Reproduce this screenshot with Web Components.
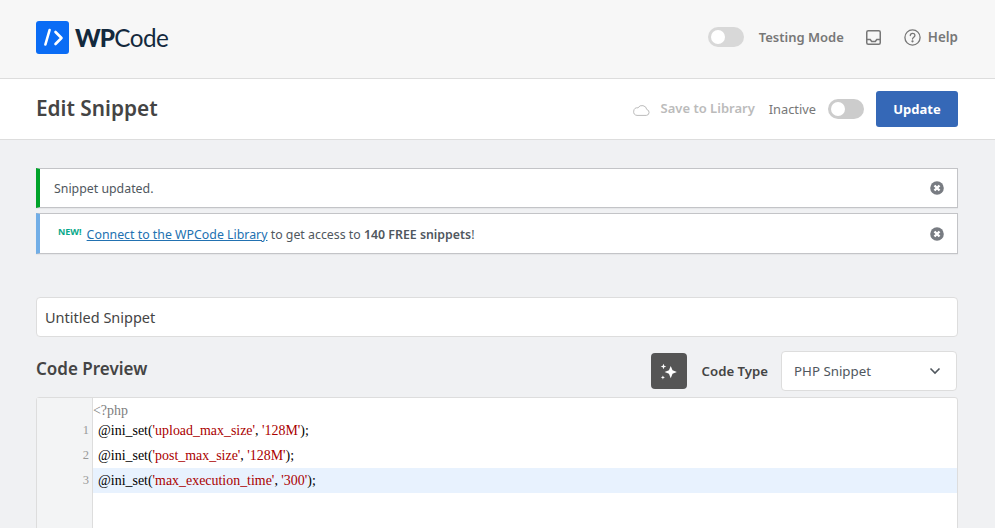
<!DOCTYPE html>
<html><head><meta charset="utf-8"><style>
html,body{margin:0;padding:0;background:#fff;height:528px;overflow:hidden}
body{font-family:"Noto Sans","Open Sans",sans-serif;}
wp-page{width:995px}
</style></head><body>
<wp-page>
 <wp-topbar></wp-topbar>
 <wp-titlebar></wp-titlebar>
 <wp-content>
  <wp-notice slot="notices" kind="ok">Snippet updated.</wp-notice>
  <wp-notice slot="notices" kind="info"><sup style="font-size:9px;font-weight:700;color:#09a88a;position:relative;top:-4px;margin:0 5px 0 0;line-height:0;vertical-align:baseline">NEW!</sup><a href="#" style="color:#2271b1">Connect to the WPCode Library</a> to get access to <b style="font-weight:600">140 FREE snippets</b>!</wp-notice>
  <wp-title-input slot="title"></wp-title-input>
  <wp-code-head slot="head"></wp-code-head>
  <wp-editor slot="editor"></wp-editor>
 </wp-content>
</wp-page>
<script>
function def(name,html){customElements.define(name,class extends HTMLElement{constructor(){super();this.attachShadow({mode:"open"}).innerHTML=html;}});}
def('wp-toggle',`<style>:host{display:block;width:36px;height:20px;border-radius:10px;background:var(--bg,#ccc);position:relative}
i{position:absolute;left:3px;top:3px;width:14px;height:14px;border-radius:50%;background:#fff}</style><i></i>`);
def('wp-page',`<style>:host{display:block;height:528px;overflow:hidden}</style><slot></slot>`);
def('wp-topbar',`<style>:host{display:flex;align-items:center;height:74px;padding:0 37px 4px 36px;border-bottom:1px solid #ddd;background:#f7f7f7;color:#777}
.logo{display:flex;align-items:center;gap:6px;flex:1}
.w{font-size:24.300px;color:#13293d;letter-spacing:-.5px;line-height:33px;font-family:"Lato","Noto Sans",sans-serif}
.w b{font-weight:900;letter-spacing:-.9px}
.t{font-size:13px;font-weight:600;margin-left:15px;color:#777}
.h{font-size:13.400px;font-weight:600;color:#777;margin-left:7px}
wp-toggle{--bg:#d8d8d8}
svg{display:block}
.tr{margin-left:22px}
.q{margin-left:23px}
</style>
<div class="logo"><svg width="33" height="33" viewBox="0 0 33 33"><rect width="33" height="33" rx="3" fill="#0a6cf5"/><path d="M13.600 9.500 9.400 24M19.500 11.500l6 6-6 6" transform="translate(0 -.5)" fill="none" stroke="#fff" stroke-width="2.600" stroke-linecap="round" stroke-linejoin="round"/></svg><span class="w"><b>WP</b>Code</span></div>
<wp-toggle></wp-toggle><span class="t">Testing Mode</span>
<svg class="tr" width="15" height="15" viewBox="0 0 15 15" fill="none" stroke="#777" stroke-width="1.500"><rect x=".75" y=".75" width="13.500" height="13.500" rx="1.500"/><path d="M1 9.500h3.200l1.500 2h3.600l1.500-2H14"/></svg>
<svg class="q" width="17" height="17" viewBox="0 0 17 17" fill="none" stroke="#777" stroke-width="1.300"><circle cx="8.500" cy="8.500" r="7.600"/><path d="M6.300 6.600c0-3 4.600-3 4.600-.2 0 1.700-2.400 1.800-2.400 3.600" stroke-linecap="round"/><circle cx="8.500" cy="12.300" r=".5" fill="#777"/></svg>
<span class="h">Help</span>`);
def('wp-titlebar',`<style>:host{display:flex;align-items:center;height:60px;border-bottom:1px solid #ddd;background:#fff;padding:0 37px 0 36px}
h1{margin:0 0 1px;font-size:20.800px;font-weight:600;color:#444;flex:1;line-height:27px}
.s{font-size:13px;font-weight:600;color:#bbb;margin:0 0 2px 11px}
.i{font-size:12.800px;color:#777;margin:0 12px 0 14px}
svg{display:block;margin-top:2px}
button{all:unset;box-sizing:border-box;width:82px;height:36px;background:#3568b7;color:#fff;border-radius:3px;font:700 13px "Noto Sans",sans-serif;text-align:center;line-height:36px;margin-left:12px}
</style><h1>Edit Snippet</h1>
<svg width="17" height="12" viewBox="0 0 17 12" fill="none" stroke="#bbb" stroke-width="1"><path d="M4 11.400h9.300a3 3 0 0 0 .5-5.900A4.800 4.800 0 0 0 5 3.800a3.800 3.800 0 0 0-1 7.600z"/></svg>
<span class="s">Save to Library</span><span class="i">Inactive</span><wp-toggle></wp-toggle><button>Update</button>`);
def('wp-content',`<style>:host{display:block;background:#f0f1f3;padding:28px 37px 0 36px;height:388px;box-sizing:border-box}
.n{display:flex;flex-direction:column;gap:5px;margin-bottom:43px}
</style><div class="n"><slot name="notices"></slot></div><slot name="title"></slot><slot name="head"></slot><slot name="editor"></slot>`);
def('wp-notice',`<style>:host{display:flex;align-items:center;box-sizing:border-box;height:40px;background:#fff;border:1px solid #c3c4c7;border-left:4px solid #00a32a;padding:0 13px 0 14px;font-size:12.350px;color:#50575e;box-shadow:0 1px 1px rgba(0,0,0,.04)}
:host([kind=info]){border-left-color:#72aee6;height:41px;padding-top:1px;padding-left:18px}
.t{flex:1}svg{display:block}</style><span class="t"><slot></slot></span>
<svg width="14" height="14" viewBox="0 0 14 14"><circle cx="7" cy="7" r="6.800" fill="#787c82"/><path d="M4.500 4.500l5 5M9.500 4.500l-5 5" stroke="#fff" stroke-width="2.400"/></svg>`);
def('wp-title-input',`<style>:host{display:flex;align-items:center;box-sizing:border-box;height:40px;background:#fff;border:1px solid #ddd;border-radius:4px;padding:0 8px;font-size:14.500px;color:#444}</style>Untitled Snippet`);
def('wp-code-head',`<style>:host{display:flex;align-items:center;height:40px;margin-top:14px;margin-bottom:6px}
h2{margin:0 0 5px;flex:1;font-size:17px;font-weight:600;color:#444}
.ai{width:36px;height:36px;border-radius:4px;background:#555;display:flex;align-items:center;justify-content:center}
.l{font-size:13.200px;font-weight:600;color:#444;margin:0 13px 0 15px}
.sel{box-sizing:border-box;width:176px;height:40px;background:#fff;border:1px solid #ddd;border-radius:4px;margin-right:1px;display:flex;align-items:center;justify-content:space-between;padding:0 15px 0 12px;font-size:13.300px;color:#50575e}
</style><h2>Code Preview</h2>
<span class="ai"><svg width="19" height="19" viewBox="0 0 17 17" fill="#fff"><path d="M10.500 3.500l1.600 3.900 3.900 1.600-3.900 1.600-1.600 3.900-1.600-3.900L5 9l3.900-1.600zM4 1.500l.7 1.800 1.800.7-1.800.7L4 6.500l-.7-1.800L1.500 4l1.800-.7zM3.500 12l.5 1.300 1.300.5-1.300.5-.5 1.300-.5-1.300-1.300-.5 1.300-.5z"/></svg></span>
<span class="l">Code Type</span>
<div class="sel">PHP Snippet<svg width="12" height="8" viewBox="0 0 12 8" fill="none" stroke="#50575e" stroke-width="1.600"><path d="M1.500 1.500 6 6l4.500-4.500"/></svg></div>`);
def('wp-editor',`<style>:host{display:flex;box-sizing:border-box;height:200px;background:#fff;border:1px solid #ddd;border-radius:3px 3px 0 0;font-family:"Liberation Serif",serif;font-size:13.930px;color:#000}
.g{width:56px;flex:none;background:#f3f4f5;border-right:1px solid #ddd;text-align:right;color:#999;font-size:12.500px;box-sizing:border-box;padding-right:3px}
.g div{height:25px;line-height:25px}.g div:first-child{height:20px}
.c{flex:1}
.r{height:25px;line-height:25px;padding-left:5px;white-space:pre}
.r.a{background:#e8f2fe}
.r.p{height:20px;padding:0;color:#808080;line-height:26px}
s{text-decoration:none;color:#a00}
</style><div class="g"><div></div><div>1</div><div>2</div><div>3</div></div>
<div class="c"><div class="r p">&lt;?php</div>
<div class="r">@ini_set(<s>'upload_max_size'</s>, <s>'128M'</s>);</div>
<div class="r">@ini_set(<s>'post_max_size'</s>, <s>'128M'</s>);</div>
<div class="r a">@ini_set(<s>'max_execution_time'</s>, <s>'300'</s>);</div></div>`);
</script>
</body></html>
